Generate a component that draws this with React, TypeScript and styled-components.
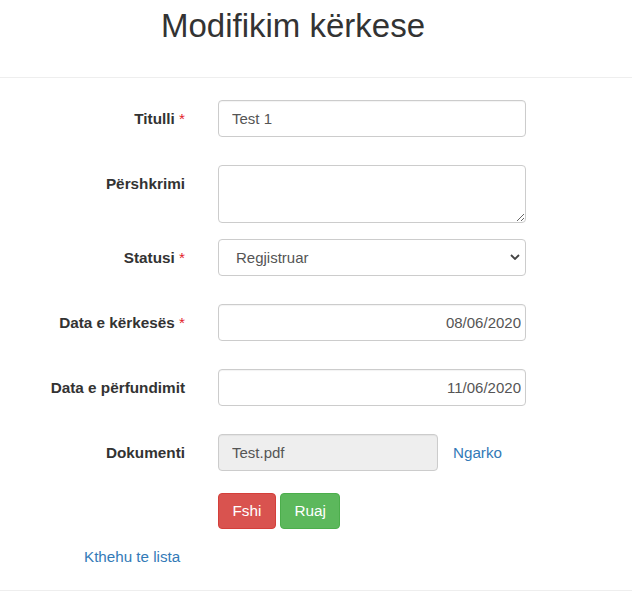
import React from "react";
import styled, { createGlobalStyle } from "styled-components";

const GlobalStyle = createGlobalStyle`
  html, body {
    margin: 0;
    padding: 0;
    background: #fff;
    font-family: "Liberation Sans", Arial, sans-serif;
    font-size: 15px;
    color: #333;
  }
  * { box-sizing: border-box; }
`;

const Page = styled.div`
  width: 632px;
`;

const Header = styled.header`
  padding: 8px 0 0 161px;
  height: 77px;
`;

const Title = styled.h1`
  margin: 0;
  font-size: 33px;
  line-height: 36px;
  font-weight: 400;
  color: #333;
`;

const Rule = styled.hr`
  margin: 0;
  border: 0;
  border-top: 1px solid #eee;
  height: 0;
`;

const Form = styled.form`
  padding-top: 22px;
`;

const Group = styled.div<{ $mb: number }>`
  display: grid;
  grid-template-columns: 186px 308px auto;
  column-gap: 32px;
  align-items: start;
  margin-bottom: ${(p) => p.$mb}px;
`;

const Label = styled.label`
  text-align: right;
  font-weight: 700;
  font-size: 15.3px;
  line-height: 37px;
  color: #333;
  white-space: nowrap;
  padding-right: 1px;
`;

const Req = styled.span`
  color: #e3232b;
  font-weight: 400;
`;

const Input = styled.input<{ $align?: string; $disabled?: boolean }>`
  display: block;
  width: 100%;
  height: 37px;
  padding: 0 4px 0 13px;
  font-family: inherit;
  font-size: 15px;
  color: #555;
  text-align: ${(p) => p.$align || "left"};
  background: ${(p) => (p.$disabled ? "#eee" : "#fff")};
  border: 1px solid #ccc;
  border-radius: 4px;
  box-shadow: inset 0 1px 1px rgba(0, 0, 0, 0.05);
  outline: none;
`;

const TextArea = styled.textarea`
  display: block;
  width: 100%;
  height: 58px;
  padding: 8px 13px;
  font-family: inherit;
  font-size: 15px;
  color: #555;
  border: 1px solid #ccc;
  border-radius: 4px;
  resize: vertical;
  outline: none;
`;

const SelectWrap = styled.div`
  position: relative;
`;

const Select = styled.select`
  display: block;
  width: 100%;
  height: 37px;
  padding: 0 30px 0 17px;
  font-family: inherit;
  font-size: 15px;
  color: #555;
  background: #fff;
  border: 1px solid #ccc;
  border-radius: 4px;
  appearance: none;
  outline: none;
`;

const Chevron = styled.svg`
  position: absolute;
  right: 6px;
  top: 15px;
  pointer-events: none;
`;

const DocCell = styled.div`
  grid-column: 2 / 4;
  display: flex;
  align-items: center;
  gap: 15px;
`;

const DocInput = styled(Input)`
  width: 220px;
`;

const Link = styled.a`
  color: #337ab7;
  text-decoration: none;
  font-size: 15.2px;
  line-height: 17px;
`;

const Actions = styled.div`
  grid-column: 2 / 4;
  display: flex;
  gap: 4px;
`;

const Button = styled.button<{ $variant: "danger" | "success" }>`
  height: 36px;
  padding: 0 13.5px;
  font-family: inherit;
  font-size: 15.3px;
  color: #fff;
  border-radius: 4px;
  border: 1px solid ${(p) => (p.$variant === "danger" ? "#d43f3a" : "#4cae4c")};
  background: ${(p) => (p.$variant === "danger" ? "#d9534f" : "#5cb85c")};
  cursor: pointer;
`;

const Footer = styled.div`
  padding: 19px 0 25px 84px;
  line-height: 17px;
`;

export default function App() {
  return (
    <Page>
      <GlobalStyle />
      <Header>
        <Title>Modifikim kërkese</Title>
      </Header>
      <Rule />
      <Form onSubmit={(e) => e.preventDefault()}>
        <Group $mb={28}>
          <Label>
            Titulli <Req>*</Req>
          </Label>
          <Input defaultValue="Test 1" />
        </Group>
        <Group $mb={16}>
          <Label>Përshkrimi</Label>
          <TextArea />
        </Group>
        <Group $mb={28}>
          <Label>
            Statusi <Req>*</Req>
          </Label>
          <SelectWrap>
            <Select defaultValue="Regjistruar">
              <option>Regjistruar</option>
              <option>Në proces</option>
              <option>Përfunduar</option>
            </Select>
            <Chevron width="10" height="6" viewBox="0 0 10 6">
              <path d="M1 1 L5 5 L9 1" fill="none" stroke="#444" strokeWidth="1.8" />
            </Chevron>
          </SelectWrap>
        </Group>
        <Group $mb={28}>
          <Label>
            Data e kërkesës <Req>*</Req>
          </Label>
          <Input $align="right" defaultValue="08/06/2020" />
        </Group>
        <Group $mb={28}>
          <Label>Data e përfundimit</Label>
          <Input $align="right" defaultValue="11/06/2020" />
        </Group>
        <Group $mb={22}>
          <Label>Dokumenti</Label>
          <DocCell>
            <DocInput $disabled readOnly defaultValue="Test.pdf" />
            <Link href="#">Ngarko</Link>
          </DocCell>
        </Group>
        <Group $mb={0}>
          <span />
          <Actions>
            <Button type="button" $variant="danger">Fshi</Button>
            <Button type="submit" $variant="success">Ruaj</Button>
          </Actions>
        </Group>
      </Form>
      <Footer>
        <Link href="#">Kthehu te lista</Link>
      </Footer>
      <Rule />
    </Page>
  );
}
